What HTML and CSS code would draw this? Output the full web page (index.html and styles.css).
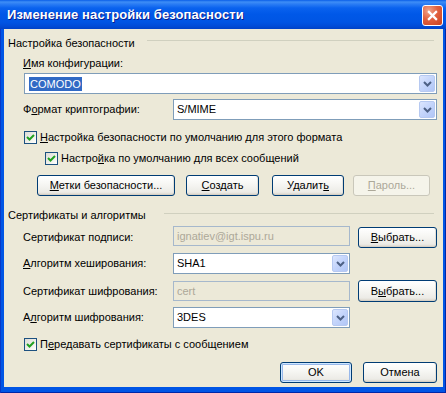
FILE: index.html
```html
<!DOCTYPE html>
<html lang="ru">
<head>
<meta charset="utf-8">
<title>Изменение настройки безопасности</title>
<link rel="stylesheet" href="styles.css">
</head>
<body>
<div class="window">
  <div class="titlebar">
    <span class="title">Изменение настройки безопасности</span>
    <span class="close"><svg viewBox="0 0 21 21" width="21" height="21"><path d="M6.5 6.5 L14.5 14.5 M14.5 6.5 L6.5 14.5" stroke="#fff" stroke-width="2.4" stroke-linecap="square"/></svg></span>
  </div>
  <div class="frame">
    <div class="client">
      <div class="group-head g1"><span class="gh-text">Настройка безопасности</span><i class="rule"></i></div>

      <div class="lbl name-label"><u>И</u>мя конфигурации:</div>
      <div class="combo name-combo"><span class="val"><span class="sel">COMODO</span></span><span class="drop"><svg viewBox="0 0 9 6" width="9" height="6"><polyline points="1,1 4.5,4.5 8,1" fill="none" stroke="#4D6185" stroke-width="2"/></svg></span></div>

      <div class="row format-row">
        <span class="lbl field-lbl">Ф<u>о</u>рмат криптографии:</span>
        <div class="combo wide-combo"><span class="val">S/MIME</span><span class="drop"><svg viewBox="0 0 9 6" width="9" height="6"><polyline points="1,1 4.5,4.5 8,1" fill="none" stroke="#4D6185" stroke-width="2"/></svg></span></div>
      </div>

      <label class="check cb1"><span class="box"><svg viewBox="0 0 11 11" width="11" height="11"><polyline points="2,5 4.5,7.5 9,3" fill="none" stroke="#21A121" stroke-width="2"/></svg></span><span><u>Н</u>астройка безопасности по умолчанию для этого формата</span></label>
      <label class="check cb2"><span class="box"><svg viewBox="0 0 11 11" width="11" height="11"><polyline points="2,5 4.5,7.5 9,3" fill="none" stroke="#21A121" stroke-width="2"/></svg></span><span>Настро<u>й</u>ка по умолчанию для всех сообщений</span></label>

      <div class="btn-row">
        <button class="btn b-labels"><u>М</u>етки безопасности...</button>
        <button class="btn b-create"><u>С</u>оздать</button>
        <button class="btn b-delete">Удалит<u>ь</u></button>
        <button class="btn b-pass" disabled><u>П</u>ароль...</button>
      </div>

      <div class="group-head g2"><span class="gh-text">Сертификаты и алгоритмы</span><i class="rule"></i></div>

      <div class="row sig-row">
        <span class="lbl field-lbl">Сертификат подписи:</span>
        <div class="tbox disabled">ignatiev@igt.ispu.ru</div>
        <button class="btn b-pick"><u>В</u>ыбрать...</button>
      </div>

      <div class="row hash-row">
        <span class="lbl field-lbl"><u>А</u>лгоритм хеширования:</span>
        <div class="combo short-combo"><span class="val">SHA1</span><span class="drop"><svg viewBox="0 0 9 6" width="9" height="6"><polyline points="1,1 4.5,4.5 8,1" fill="none" stroke="#4D6185" stroke-width="2"/></svg></span></div>
      </div>

      <div class="row enc-row">
        <span class="lbl field-lbl">Сертификат шифрования:</span>
        <div class="tbox disabled">cert</div>
        <button class="btn b-pick">В<u>ы</u>брать...</button>
      </div>

      <div class="row algo-row">
        <span class="lbl field-lbl">А<u>л</u>горитм шифрования:</span>
        <div class="combo short-combo"><span class="val">3DES</span><span class="drop"><svg viewBox="0 0 9 6" width="9" height="6"><polyline points="1,1 4.5,4.5 8,1" fill="none" stroke="#4D6185" stroke-width="2"/></svg></span></div>
      </div>

      <label class="check cb3"><span class="box"><svg viewBox="0 0 11 11" width="11" height="11"><polyline points="2,5 4.5,7.5 9,3" fill="none" stroke="#21A121" stroke-width="2"/></svg></span><span>П<u>е</u>редавать сертификаты с сообщением</span></label>

      <div class="footer">
        <button class="btn b-ok default">OK</button>
        <button class="btn b-cancel">Отмена</button>
      </div>
    </div>
  </div>
</div>
</body>
</html>
```

FILE: styles.css
```css
* { box-sizing: border-box; margin: 0; padding: 0; }

body {
  margin: 0;
  width: 446px;
  height: 393px;
  overflow: hidden;
  background: #ECE9D8;
  font-family: "Liberation Sans", Tahoma, Arial, sans-serif;
  font-size: 11px;
  line-height: 13px;
  color: #000;
}

u { text-decoration: underline; text-underline-offset: 1px; }

.window {
  width: 446px;
  height: 393px;
  display: flex;
  flex-direction: column;
  background: #0054E3;
}

.titlebar {
  flex: none;
  height: 29px;
  display: flex;
  align-items: center;
  padding: 0 3px 0 7px;
  background: linear-gradient(to bottom,
    #0A5EE8 0px, #3E8EF6 2px, #2B7DF4 4px, #0A62EE 8px,
    #0058E8 14px, #0055E4 22px, #004CD8 26px, #0042C6 29px);
}

.title {
  flex: 1;
  color: #fff;
  font-weight: bold;
  font-size: 13px;
  line-height: 16px;
  letter-spacing: 0.1px;
  text-shadow: 1px 1px 0 #0A1D8C;
  margin-top: 1px;
}

.close {
  flex: none;
  width: 21px;
  height: 21px;
  margin-top: 2px;
  border: 1px solid #fff;
  border-radius: 3px;
  background: radial-gradient(circle at 30% 25%, #F0A58C 0%, #E2613F 45%, #C9401E 100%);
  display: flex;
  align-items: center;
  justify-content: center;
}
.close svg { width: 19px; height: 19px; }

.frame {
  flex: 1;
  display: flex;
  padding: 0 3px 6px 4px;
  background: #0055E5;
  box-shadow: inset 1px 0 #0838C8, inset -1px 0 #0027A8, inset 0 -1px #0027A8;
}

.client {
  flex: 1;
  display: flex;
  flex-direction: column;
  background: #ECE9D8;
  padding: 0 6px 0 4px;
}
.client > * { flex: none; }

/* group headers */
.group-head {
  height: 13px;
  display: flex;
  align-items: flex-start;
}
.gh-text { white-space: nowrap; }
.rule {
  flex: 1;
  height: 1px;
  background: #D0D0BF;
  margin: 3px 3px 0 6px;
}
.g1 { margin-top: 8px; }
.g1 .rule { margin-left: 12px; }
.g2 { margin-top: 13px; }
.g2 .rule { margin-top: 4px; margin-left: 18px; }

/* labels */
.lbl { white-space: nowrap; }
.name-label { margin-top: 7px; height: 13px; padding-left: 15px; }

/* rows */
.row {
  display: flex;
  align-items: center;
  padding-left: 15px;
}
.field-lbl { width: 150px; flex: none; }

.format-row { margin-top: 5px; height: 21px; }
.sig-row { margin-top: 4px; height: 22px; align-items: flex-start; }
.sig-row .field-lbl { margin-top: 5px; }
.hash-row { margin-top: 5px; height: 21px; }
.enc-row { margin-top: 6px; height: 22px; align-items: flex-start; }
.enc-row .field-lbl { margin-top: 5px; }
.enc-row .tbox { margin-top: 1px; }
.algo-row { margin-top: 5px; height: 21px; }

/* combo boxes */
.combo {
  display: flex;
  align-items: stretch;
  height: 21px;
  border: 1px solid #7F9DB9;
  background: #fff;
}
.combo .val {
  flex: 1;
  display: flex;
  align-items: center;
  padding-left: 3px;
  white-space: nowrap;
}
.drop {
  flex: none;
  width: 16px;
  margin: 1px;
  border: 1px solid #B6C9F1;
  border-radius: 2px;
  background: linear-gradient(135deg, #DCE6FE 0%, #C3D4FB 50%, #B1C6F6 100%);
  display: flex;
  align-items: center;
  justify-content: center;
}
.name-combo { margin-top: 3px; margin-left: 16px; }
.name-combo .val { padding-left: 4px; }
.sel { background: #316AC5; color: #fff; padding: 0 1px; line-height: 14px; }
.wide-combo { flex: 1; }
.short-combo { width: 177px; }

/* text boxes */
.tbox {
  width: 177px;
  height: 20px;
  border: 1px solid #A6B8CC;
  background: #ECE9D8;
  color: #ACA899;
  padding-left: 3px;
  display: flex;
  align-items: center;
  white-space: nowrap;
}

/* checkboxes */
.check {
  display: flex;
  align-items: center;
  height: 13px;
  white-space: nowrap;
}
.box {
  width: 13px;
  height: 13px;
  flex: none;
  border: 1px solid #1C5180;
  background: linear-gradient(135deg, #DCDCD7 0%, #F4F4F0 70%, #FFFFFF 100%);
  margin-right: 3px;
  display: flex;
  align-items: center;
  justify-content: center;
}
.cb1 { margin-top: 11px; padding-left: 16px; }
.cb2 { margin-top: 8px; padding-left: 37px; }
.cb3 { margin-top: 10px; padding-left: 16px; }

/* buttons */
.btn {
  font-family: inherit;
  font-size: 11px;
  line-height: 13px;
  color: #000;
  height: 21px;
  border: 1px solid #003C74;
  border-radius: 3px;
  background: linear-gradient(to bottom, #FFFFFF 0%, #F7F7F4 40%, #ECEBE6 85%, #D8D2C6 100%);
  box-shadow: inset 0 -1px 0 #D6D0C5, inset -1px 0 0 #E3E0D8;
  display: flex;
  align-items: center;
  justify-content: center;
  white-space: nowrap;
  flex: none;
}
.btn:disabled {
  border-color: #C9C7BA;
  background: #F5F4EA;
  box-shadow: none;
  color: #ACA899;
}
.btn.default {
  box-shadow: inset 0 0 0 1px #CEE7FF, inset 0 0 0 2px #98B8EA, inset 0 -2px 0 #6B8EDB;
}

.btn-row {
  display: flex;
  margin-top: 10px;
  height: 21px;
}
.b-labels { width: 138px; margin-left: 29px; }
.b-create { width: 73px; margin-left: 11px; }
.b-delete { width: 72px; margin-left: 13px; }
.b-pass { width: 77px; margin-left: 9px; }

.b-pick { width: 79px; height: 22px; margin-left: 8px; }
.sig-row .b-pick { margin-top: 1px; height: 21px; }

.footer {
  margin-top: 11px;
  height: 21px;
  display: flex;
  justify-content: flex-end;
}
.b-ok { width: 72px; }
.b-cancel { width: 74px; margin-left: 11px; }
```
